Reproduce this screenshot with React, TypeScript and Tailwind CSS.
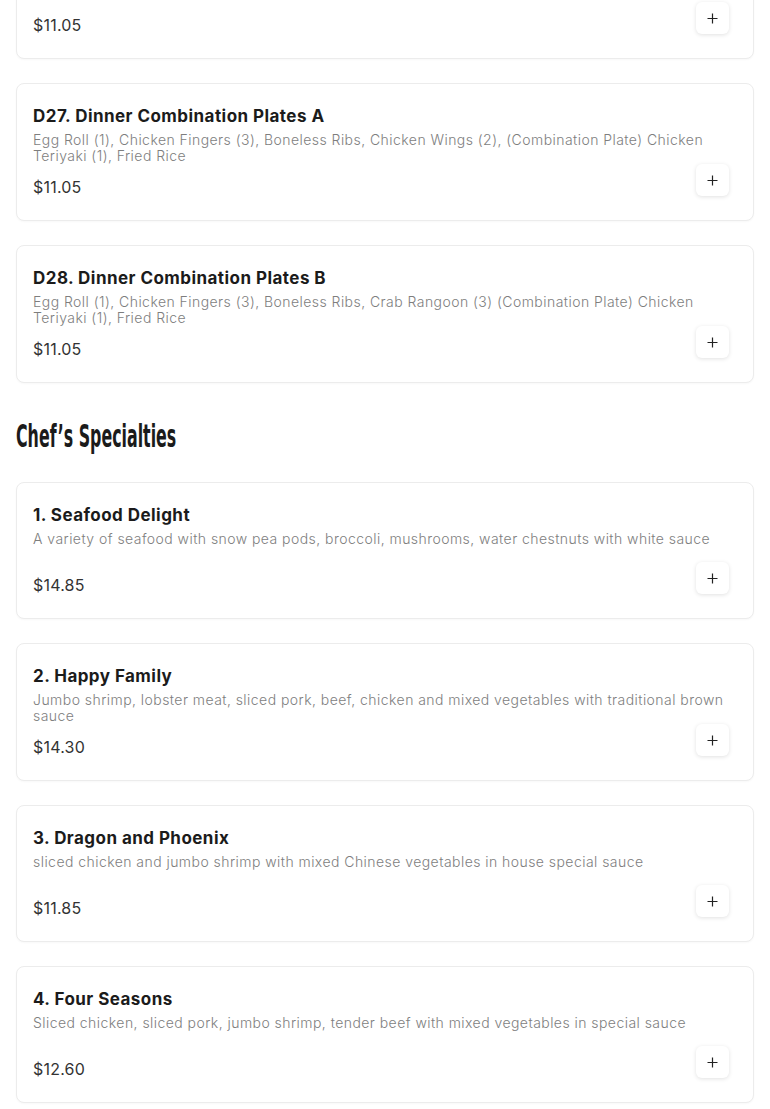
import React from "react";

type Item = { name: string; desc: string; price: string };

const top: Item[] = [
  { name: "D26. Dinner Combination Plates", desc: "Egg Roll (1), Chicken Fingers (3), Boneless Ribs, Chicken Wings (2), Fried Rice", price: "$11.05" },
  { name: "D27. Dinner Combination Plates A", desc: "Egg Roll (1), Chicken Fingers (3), Boneless Ribs, Chicken Wings (2), (Combination Plate) Chicken Teriyaki (1), Fried Rice", price: "$11.05" },
  { name: "D28. Dinner Combination Plates B", desc: "Egg Roll (1), Chicken Fingers (3), Boneless Ribs, Crab Rangoon (3) (Combination Plate) Chicken Teriyaki (1), Fried Rice", price: "$11.05" },
];

const chef: Item[] = [
  { name: "1. Seafood Delight", desc: "A variety of seafood with snow pea pods, broccoli, mushrooms, water chestnuts with white sauce", price: "$14.85" },
  { name: "2. Happy Family", desc: "Jumbo shrimp, lobster meat, sliced pork, beef, chicken and mixed vegetables with traditional brown sauce", price: "$14.30" },
  { name: "3. Dragon and Phoenix", desc: "sliced chicken and jumbo shrimp with mixed Chinese vegetables in house special sauce", price: "$11.85" },
  { name: "4. Four Seasons", desc: "Sliced chicken, sliced pork, jumbo shrimp, tender beef with mixed vegetables in special sauce", price: "$12.60" },
];

function Plus() {
  return (
    <svg width="11" height="11" viewBox="0 0 11 11" fill="none">
      <path d="M5.5 0.5v10M0.5 5.5h10" stroke="#222" strokeWidth="1.2" />
    </svg>
  );
}

function Card({ item }: { item: Item }) {
  return (
    <div className="rounded-lg border border-[#ececec] bg-white px-4 pt-[18px] pb-4 shadow-[0_1px_2px_rgba(0,0,0,0.03)]">
      <div className="text-[17px] leading-7 font-bold tracking-[0.45px] text-[#1b1b1b]">{item.name}</div>
      <div className="mt-[2px] min-h-[31px] text-[14px] leading-4 font-light tracking-[0.45px] text-[#7e7e7e]">{item.desc}</div>
      <div className="flex h-10 items-start justify-between">
        <div className="mt-[11px] text-[16px] leading-6 tracking-[0.2px] text-[#333]">{item.price}</div>
        <button className="mr-2 flex h-8 w-[33px] items-center justify-center rounded-md bg-white shadow-[0_1px_4px_rgba(0,0,0,0.12)]">
          <Plus />
        </button>
      </div>
    </div>
  );
}

export default function App() {
  return (
    <div className="h-[1109px] overflow-hidden bg-white px-4 font-['Inter','Noto_Sans',sans-serif]">
      <div className="mt-[-78px] flex flex-col gap-6">
        {top.map((it) => (
          <Card key={it.name} item={it} />
        ))}
      </div>
      <div className="pt-[36px] pb-[28px]">
        <h2 className="origin-left scale-x-[0.55] font-['Liberation_Sans_Narrow','DejaVu_Sans_Condensed',sans-serif] text-[32px] leading-[35px] font-bold text-[#1b1b1b] whitespace-nowrap">
          Chef’s Specialties
        </h2>
      </div>
      <div className="flex flex-col gap-6">
        {chef.map((it) => (
          <Card key={it.name} item={it} />
        ))}
      </div>
    </div>
  );
}
